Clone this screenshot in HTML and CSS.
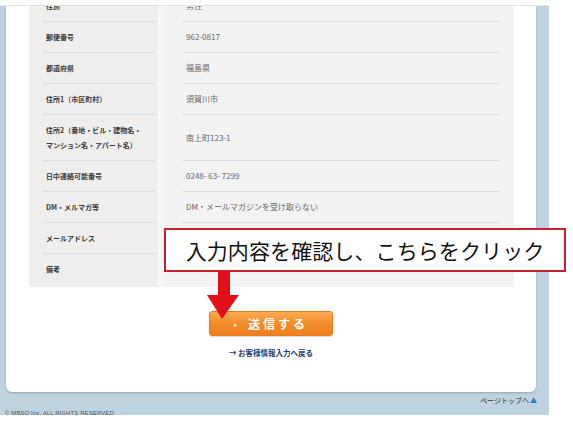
FILE: index.html
```html
<!DOCTYPE html>
<html lang="ja">
<head>
<meta charset="utf-8">
<title>確認画面</title>
<link rel="stylesheet" href="styles.css">
</head>
<body>
<div class="page">
  <div class="topbar"></div>
  <div class="frame">
    <div class="card">
      <div class="table">
        <div class="row"><div class="k"><div class="in">性別</div></div><div class="v"><div class="in">男性</div></div></div>
        <div class="row"><div class="k"><div class="in">郵便番号</div></div><div class="v"><div class="in">962-0817</div></div></div>
        <div class="row"><div class="k"><div class="in">都道府県</div></div><div class="v"><div class="in">福島県</div></div></div>
        <div class="row"><div class="k"><div class="in">住所1（市区町村）</div></div><div class="v"><div class="in">須賀川市</div></div></div>
        <div class="row"><div class="k"><div class="in">住所2（番地・ビル・建物名・<br>マンション名・アパート名）</div></div><div class="v"><div class="in">南上町123-1</div></div></div>
        <div class="row"><div class="k"><div class="in">日中連絡可能番号</div></div><div class="v"><div class="in">0248- 63- 7299</div></div></div>
        <div class="row"><div class="k"><div class="in">DM・メルマガ等</div></div><div class="v"><div class="in">DM・メールマガジンを受け取らない</div></div></div>
        <div class="row"><div class="k"><div class="in">メールアドレス</div></div><div class="v"><div class="in">&nbsp;</div></div></div>
        <div class="row last"><div class="k"><div class="in">備考</div></div><div class="v"><div class="in">&nbsp;</div></div></div>
      </div>
      <div class="actions">
        <button class="btn" type="button"><span class="tri">&#9656;</span><span class="lbl">送信する</span></button>
        <a class="back" href="#">→ お客様情報入力へ戻る</a>
      </div>
    </div>
    <div class="pagetop">ページトップへ<span class="up">▲</span></div>
    <div class="copy">© MBSO Inc. ALL RIGHTS RESERVED</div>
  </div>

  <div class="callout">入力内容を確認し、こちらをクリック</div>
  <svg class="arrow" width="36" height="50" viewBox="0 0 36 50" aria-hidden="true">
    <rect x="13" y="0" width="12" height="26" fill="#e3101c"/>
    <polygon points="2,24 34,24 17,48" fill="#e3101c"/>
  </svg>
</div>
</body>
</html>
```

FILE: styles.css
```css
html, body {
  margin: 0;
  padding: 0;
  background: #ffffff;
}

body {
  font-family: "Noto Sans CJK JP", "Noto Sans", sans-serif;
}

.page {
  position: relative;
  width: 573px;
  height: 423px;
  overflow: hidden;
}

.topbar {
  width: 549px;
  height: 5px;
  border-bottom: 1px solid #e2e2e2;
  box-sizing: content-box;
}

.frame {
  width: 549px;
  height: 409px;
  background: #bed3df;
  overflow: hidden;
  display: flex;
  flex-direction: column;
}

.card {
  margin: 0 13px 0 6px;
  height: 386px;
  background: #ffffff;
  border-radius: 0 0 6px 6px;
  box-shadow: 0 1px 2px rgba(0, 0, 0, 0.22);
  overflow: hidden;
  flex: none;
}

.table {
  margin: -15px 22px 0 23px;
  display: flex;
  flex-direction: column;
  background: #f3f3f3;
}

.row {
  display: flex;
}

.k {
  width: 129px;
  flex: none;
  background: #efeeed;
  padding: 0 3px 0 14px;
  box-sizing: border-box;
  display: flex;
}

.v {
  flex: 1;
  background: linear-gradient(to right, #f8f8f8, #f3f3f3 10px);
  padding: 0 14px 0 25px;
  display: flex;
}

.in {
  flex: 1;
  display: flex;
  align-items: center;
  border-bottom: 1px solid #dcdcdc;
  padding: 8px 0 8px 3px;
  line-height: 14px;
}

.k .in {
  font-size: 7px;
  font-weight: 700;
  color: #3a3a3a;
  line-height: 15px;
  padding: 8px 0 7px 3px;
}

.v .in {
  font-size: 8px;
  color: #666666;
}

.row.last .in {
  border-bottom-color: transparent;
  padding-bottom: 9px;
}

.actions {
  display: flex;
  flex-direction: column;
  align-items: center;
  padding-top: 24px;
}

.btn {
  width: 124px;
  height: 25px;
  margin: 0;
  padding: 0;
  border: 1px solid #e97a1b;
  border-radius: 3px;
  background: linear-gradient(to bottom, #fbab52, #f18a28 55%, #ee7f1e);
  box-shadow: 0 1px 1px rgba(0, 0, 0, 0.15);
  color: #ffffff;
  font-family: "Noto Sans CJK JP", sans-serif;
  display: flex;
  align-items: center;
  justify-content: center;
  gap: 8px;
}

.tri {
  font-size: 7px;
  color: #ffe9d0;
  margin-right: 2px;
}

.lbl {
  font-size: 12px;
  font-weight: 700;
  letter-spacing: 3px;
  line-height: 1;
}

.back {
  margin-top: 12px;
  font-size: 7.5px;
  font-weight: 700;
  color: #1f3d6c;
  text-decoration: none;
  line-height: 10px;
}

.pagetop {
  margin-top: 4px;
  padding-right: 12px;
  text-align: right;
  font-size: 7px;
  line-height: 9px;
  color: #333333;
}

.up {
  color: #2b7fc1;
  margin-left: 1px;
}

.copy {
  margin-top: 4px;
  padding-left: 5px;
  font-family: "Liberation Sans", sans-serif;
  font-size: 6px;
  line-height: 8px;
  letter-spacing: 0.1px;
  color: #555555;
}

.callout {
  position: absolute;
  left: 164px;
  top: 228px;
  width: 402px;
  height: 44px;
  box-sizing: border-box;
  border: 2px solid #c9202e;
  background: #ffffff;
  display: flex;
  align-items: center;
  justify-content: center;
  font-size: 21px;
  color: #111111;
  letter-spacing: 0.1px;
  font-family: "Noto Sans CJK JP", sans-serif;
}

.arrow {
  position: absolute;
  left: 205px;
  top: 271px;
}
```
